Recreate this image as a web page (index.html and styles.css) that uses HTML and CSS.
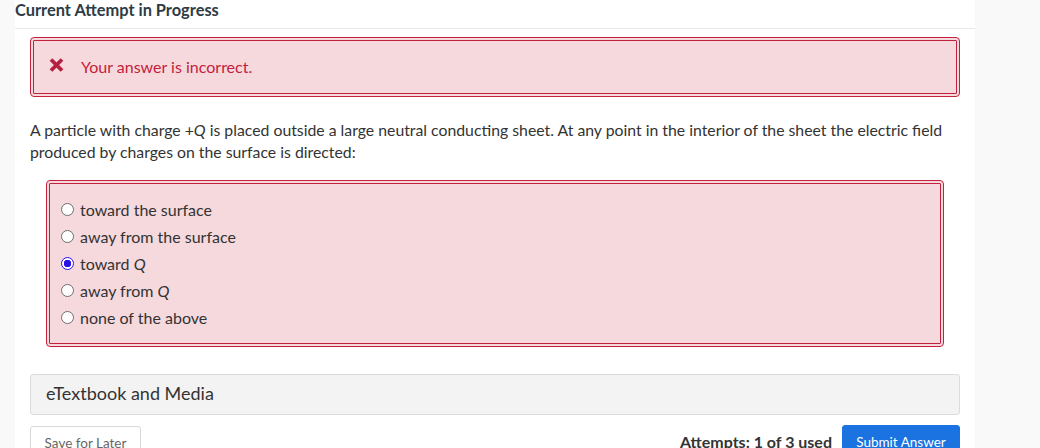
FILE: index.html
```html
<!DOCTYPE html>
<html>
<head>
<meta charset="utf-8">
<link rel="stylesheet" href="styles.css">
</head>
<body>
<div class="page">
  <div class="main">
    <h1 class="title">Current Attempt in Progress</h1>
    <div class="content">
      <div class="alert">
        <svg class="x-icon" width="15" height="14" viewBox="0 0 15 14"><path d="M2 1.5 L13 12.5 M13 1.5 L2 12.5" stroke="#b52040" stroke-width="3.8" stroke-linecap="butt"/></svg>
        <span class="alert-text">Your answer is incorrect.</span>
      </div>
      <p class="question">A particle with charge +<i>Q</i> is placed outside a large neutral conducting sheet. At any point in the interior of the sheet the electric field produced by charges on the surface is directed:</p>
      <div class="options">
        <label class="opt"><input type="radio" name="a" class="radio"><span>toward the surface</span></label>
        <label class="opt"><input type="radio" name="a" class="radio"><span>away from the surface</span></label>
        <label class="opt"><input type="radio" name="a" class="radio" checked><span>toward <i>Q</i></span></label>
        <label class="opt"><input type="radio" name="a" class="radio"><span>away from <i>Q</i></span></label>
        <label class="opt"><input type="radio" name="a" class="radio"><span>none of the above</span></label>
      </div>
      <div class="media">eTextbook and Media</div>
      <div class="actions">
        <button class="btn btn-save">Save for Later</button>
        <div class="right">
          <span class="attempts">Attempts: 1 of 3 used</span>
          <button class="btn btn-submit">Submit Answer</button>
        </div>
      </div>
    </div>
  </div>
</div>
</body>
</html>
```
FILE: styles.css
```css
html, body {
  margin: 0;
  padding: 0;
  background: #f9f9f9;
  font-family: Lato, "Open Sans", sans-serif;
  color: #333;
  height: 448px;
  overflow: hidden;
}
.page {
  padding-left: 15px;
}
.main {
  width: 960px;
  background: #fff;
  height: 448px;
}
.title {
  margin: 0;
  font-size: 16.4px;
  font-weight: 700;
  color: #2d3b45;
  height: 28px;
  line-height: 20px;
  border-bottom: 1px solid #e8e8e8;
  padding-left: 0;
}
.content {
  padding: 8px 15px 0 15px;
}
.alert {
  border: 4px double #c3213c;
  border-radius: 4px;
  background: #f6d9dd;
  display: flex;
  align-items: center;
  padding-left: 15px;
  padding-bottom: 1px;
  box-sizing: border-box;
  height: 60px;
}
.x-icon {
  display: block;
  margin-right: 17px;
  margin-top: -4px;
}
.alert-text {
  color: #c3213c;
  font-size: 16px;
}
.question {
  margin: 22px 0 0 0;
  font-size: 15.8px;
  line-height: 22px;
  color: #333;
}
.options {
  margin: 17px 16px 0 16px;
  border: 4px double #c3213c;
  border-radius: 4px;
  background: #f6d9dd;
  padding: 12px 12px 10px 11px;
  display: flex;
  flex-direction: column;
  height: 167px;
  box-sizing: border-box;
}
.opt {
  display: flex;
  align-items: center;
  height: 27px;
  font-size: 16px;
  color: #333;
}
.radio {
  appearance: none;
  -webkit-appearance: none;
  width: 13px;
  height: 13px;
  margin: 0 6px 0 0;
  border: 1px solid #6d6d6d;
  border-radius: 50%;
  background: #fff;
  box-sizing: border-box;
  flex: none;
}
.radio:checked {
  border: 1px solid #2a12e8;
  background: radial-gradient(circle, #2a12e8 0 3.5px, #fff 4px);
}
.media {
  margin-top: 27px;
  height: 41px;
  box-sizing: border-box;
  border: 1px solid #dcdcdc;
  border-radius: 3px;
  background: #f3f3f3;
  font-size: 18px;
  color: #333;
  display: flex;
  align-items: center;
  padding-left: 15px;
  padding-bottom: 3px;
}
.actions {
  margin-top: 10px;
  display: flex;
  justify-content: space-between;
  align-items: flex-start;
}
.btn {
  font-family: Lato, "Open Sans", sans-serif;
  font-size: 13.5px;
  border-radius: 3px;
  height: 34px;
  box-sizing: border-box;
  cursor: pointer;
}
.btn-save {
  margin-top: 1px;
  width: 111px;
  background: #fff;
  border: 1px solid #d8d8d8;
  color: #666;
  padding: 0;
}
.right {
  display: flex;
  align-items: flex-start;
}
.attempts {
  font-size: 16px;
  font-weight: 700;
  color: #333;
  margin-right: 10px;
  margin-top: 7px;
}
.btn-submit {
  width: 118px;
  background: #1a73e0;
  border: 1px solid #1a73e0;
  color: #fff;
  padding: 0;
}
```
